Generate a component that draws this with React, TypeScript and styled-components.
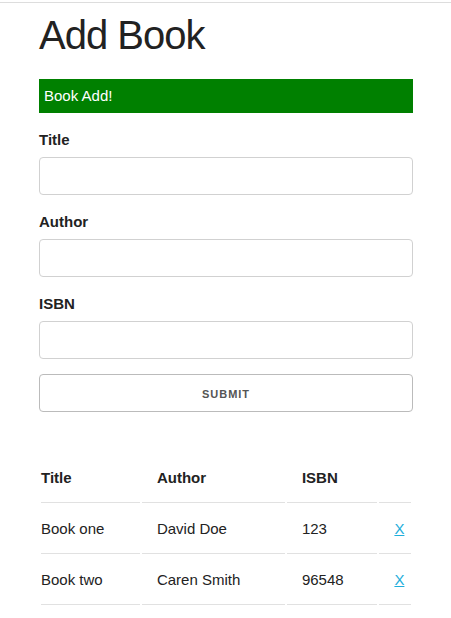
import React, { useId } from "react";
import styled, { createGlobalStyle } from "styled-components";

const GlobalStyle = createGlobalStyle`
  *, *::before, *::after { box-sizing: border-box; }
  body {
    margin: 0;
    background: #fff;
    color: #222;
    font: 400 15px/24px "Liberation Sans", Arial, sans-serif;
  }
`;

const Page = styled.div`
  border-top: 1px solid #ddd;
  margin-top: 2px;
`;

const Container = styled.main`
  padding: 8px 38px 0 39px;
`;

const Heading = styled.h1`
  margin: 0 0 20px;
  font-size: 40px;
  line-height: 48px;
  font-weight: 400;
  letter-spacing: -1px;
`;

const Alert = styled.div`
  padding: 5px;
  margin-bottom: 15px;
  background: #008000;
  color: #fff;
`;

const Field = styled.div`
  margin-bottom: 15px;
`;

const Label = styled.label`
  display: block;
  margin-bottom: 5px;
  font-weight: 700;
`;

const TextInput = styled.input`
  display: block;
  width: 100%;
  height: 38px;
  padding: 6px 10px;
  border: 1px solid #d1d1d1;
  border-radius: 4px;
  background: #fff;
  font: inherit;
`;

const SubmitButton = styled.button`
  display: block;
  width: 100%;
  height: 38px;
  margin-bottom: 40px;
  border: 1px solid #bbb;
  border-radius: 4px;
  background: transparent;
  color: #555;
  font: 700 11px/36px "Liberation Sans", Arial, sans-serif;
  letter-spacing: 1px;
`;

const BookTable = styled.table`
  width: 100%;
  border-collapse: separate;
  border-spacing: 2px;

  th, td {
    padding: 12px 15px;
    border-bottom: 1px solid #e1e1e1;
    text-align: left;
  }
  th:first-child, td:first-child { padding-left: 0; }
  th:last-child, td:last-child { padding-right: 0; }
`;

const RemoveLink = styled.a`
  color: #1eaedb;
`;

const books = [
  { title: "Book one", author: "David Doe", isbn: "123" },
  { title: "Book two", author: "Caren Smith", isbn: "96548" },
];

function FormField({ label }: { label: string }) {
  const id = useId();
  return (
    <Field>
      <Label htmlFor={id}>{label}</Label>
      <TextInput id={id} type="text" />
    </Field>
  );
}

export default function App() {
  return (
    <Page>
      <GlobalStyle />
      <Container>
        <Heading>Add Book</Heading>
        <Alert role="status">Book Add!</Alert>
        <form onSubmit={(e) => e.preventDefault()}>
          <FormField label="Title" />
          <FormField label="Author" />
          <FormField label="ISBN" />
          <SubmitButton type="submit">SUBMIT</SubmitButton>
        </form>
        <BookTable>
          <thead>
            <tr>
              <th>Title</th>
              <th>Author</th>
              <th>ISBN</th>
              <th></th>
            </tr>
          </thead>
          <tbody>
            {books.map((book) => (
              <tr key={book.isbn}>
                <td>{book.title}</td>
                <td>{book.author}</td>
                <td>{book.isbn}</td>
                <td><RemoveLink href="#">X</RemoveLink></td>
              </tr>
            ))}
          </tbody>
        </BookTable>
      </Container>
    </Page>
  );
}
